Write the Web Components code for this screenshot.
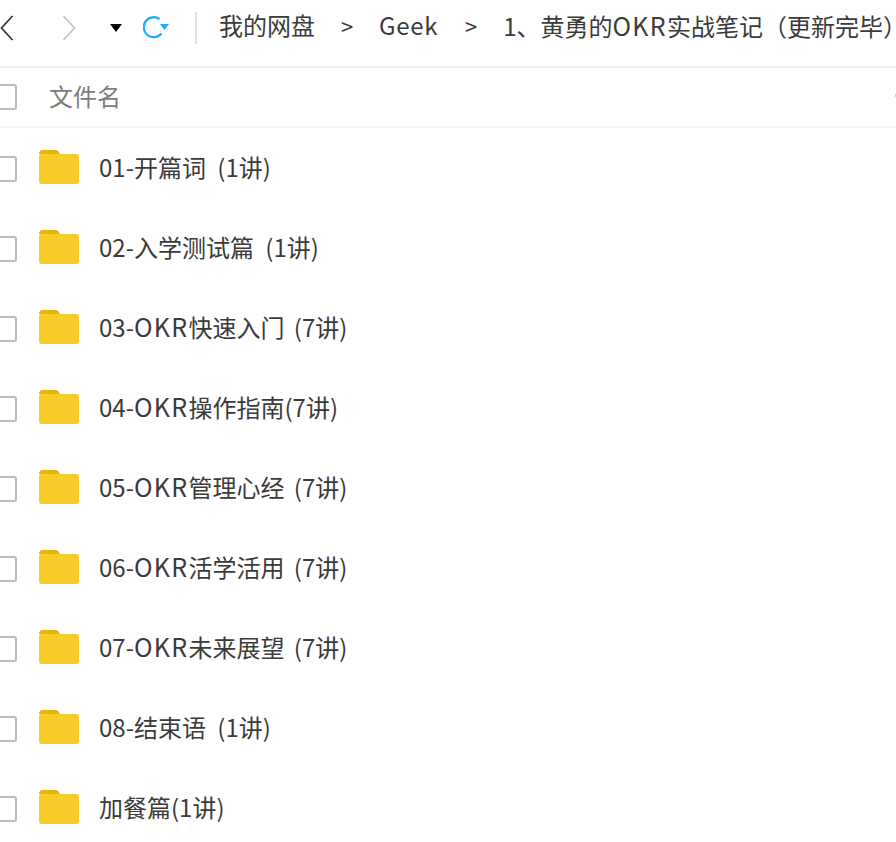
<!DOCTYPE html>
<html lang="zh">
<head>
<meta charset="utf-8">
<title>我的网盘</title>
<style>
  html, body { margin: 0; background: #fff; }
  body {
    width: 896px;
    height: 842px;
    overflow: hidden;
    font-family: "Noto Sans CJK SC", "Noto Sans", sans-serif;
    color: #3b3b3b;
  }
  /* latin runs are wider in the reference than in the CJK font */
  .en { font-size: 25px; letter-spacing: 1.3px; }
  .geek { letter-spacing: .7px; margin-right: 1px; }
  .end { font-feature-settings: "halt"; }
  disk-row.wide { word-spacing: 6px; }
</style>
</head>
<body>
<disk-toolbar>
  <disk-crumb>我的网盘</disk-crumb>
  <disk-crumb><span class="geek">Geek</span></disk-crumb>
  <disk-crumb last>1、黄勇的<span class="en">OKR</span>实战笔记（更新完毕<span class="end">）</span></disk-crumb>
</disk-toolbar>
<disk-list-header>文件名</disk-list-header>
<disk-row class="wide">01-开篇词 (1讲)</disk-row>
<disk-row class="wide">02-入学测试篇 (1讲)</disk-row>
<disk-row>03-<span class="en">OKR</span>快速入门 (7讲)</disk-row>
<disk-row>04-<span class="en">OKR</span>操作指南(7讲)</disk-row>
<disk-row>05-<span class="en">OKR</span>管理心经 (7讲)</disk-row>
<disk-row>06-<span class="en">OKR</span>活学活用 (7讲)</disk-row>
<disk-row>07-<span class="en">OKR</span>未来展望 (7讲)</disk-row>
<disk-row class="wide">08-结束语 (1讲)</disk-row>
<disk-row>加餐篇(1讲)</disk-row>

<script>
(() => {
  const CHECKBOX_STYLE = `
    .check {
      flex: none;
      box-sizing: border-box;
      width: 25px;
      height: 26px;
      margin-left: -8px;
      border: 2px solid #bdbdbd;
      border-radius: 3px;
      background: #fff;
    }
  `;

  class DiskToolbar extends HTMLElement {
    constructor() {
      super();
      this.attachShadow({ mode: 'open' }).innerHTML = `
        <style>
          :host {
            display: flex;
            align-items: center;
            box-sizing: border-box;
            height: 68px;
            padding-bottom: 10px;
            border-bottom: 2px solid #f0f0f0;
            white-space: nowrap;
            overflow: hidden;
          }
          svg { display: block; flex: none; }
          .back { margin-left: 0; }
          .forward { margin-left: 48px; }
          .drop { margin-left: 34px; margin-bottom: 1px; }
          .refresh { margin-left: 21px; margin-bottom: 2px; }
          .divider {
            flex: none;
            width: 2px;
            height: 32px;
            margin: 0 22px 0 25px;
            background: #e2e2e2;
          }
          .crumbs { display: flex; align-items: center; margin-bottom: 7px; }
        </style>
        <svg class="back" width="14" height="26" viewBox="0 0 14 26" fill="none" stroke="#3a3a3a" stroke-width="1.8">
          <path d="M12.500 1 1.500 13l11 12"/>
        </svg>
        <svg class="forward" width="14" height="26" viewBox="0 0 14 26" fill="none" stroke="#c4c4c4" stroke-width="1.8">
          <path d="M1.500 1 12.500 13l-11 12"/>
        </svg>
        <svg class="drop" width="12" height="8" viewBox="0 0 12 8" fill="#000">
          <path d="M0 0h12L6 8z"/>
        </svg>
        <svg class="refresh" width="27" height="24" viewBox="0 0 27 24" fill="none">
          <path d="M16.500 4A10 10 0 1 0 18.500 18.500" stroke="#1fa9ff" stroke-width="2.200"/>
          <path d="M17 9h9l-4.500 6z" fill="#1fa9ff"/>
        </svg>
        <div class="divider"></div>
        <div class="crumbs"><slot></slot></div>
      `;
    }
  }

  class DiskCrumb extends HTMLElement {
    constructor() {
      super();
      this.attachShadow({ mode: 'open' }).innerHTML = `
        <style>
          :host {
            display: inline-flex;
            align-items: center;
            font-size: 24px;
            color: #3b3b3b;
          }
          .sep { width: 64px; text-align: center; font-size: 22px; }
          :host([last]) .sep { display: none; }
        </style>
        <span><slot></slot></span><span class="sep">&gt;</span>
      `;
    }
  }

  class DiskListHeader extends HTMLElement {
    constructor() {
      super();
      this.attachShadow({ mode: 'open' }).innerHTML = `
        <style>
          ${CHECKBOX_STYLE}
          :host {
            display: flex;
            align-items: center;
            box-sizing: border-box;
            height: 60px;
            margin-bottom: 1px;
            border-bottom: 2px solid #f5f5f5;
            font-size: 24px;
            color: #7d7d7d;
          }
          .label { margin-left: 32px; margin-bottom: 4px; }
          .caret { flex: none; width: 1px; height: 3px; margin: 0 0 3px auto; background: #a6dcff; }
        </style>
        <div class="check"></div>
        <span class="label"><slot></slot></span>
        <span class="caret"></span>
      `;
    }
  }

  class DiskRow extends HTMLElement {
    constructor() {
      super();
      this.attachShadow({ mode: 'open' }).innerHTML = `
        <style>
          ${CHECKBOX_STYLE}
          :host {
            display: flex;
            align-items: center;
            height: 80px;
            font-size: 24px;
            color: #3b3b3b;
            white-space: nowrap;
            word-spacing: 4px;
          }
          svg { display: block; flex: none; margin-left: 22px; margin-bottom: 4px; }
          .name { margin-left: 20px; margin-bottom: 6px; }
        </style>
        <div class="check"></div>
        <svg width="40" height="34" viewBox="0 0 40 34">
          <path d="M0 4a4 4 0 0 1 4-4h13a3 3 0 0 1 2.500 1.500L21 4z" fill="#e9b500"/>
          <path d="M0 7a3 3 0 0 1 3-3h34a3 3 0 0 1 3 3v24a3 3 0 0 1-3 3H3a3 3 0 0 1-3-3z" fill="#f9cb2a"/>
        </svg>
        <span class="name"><slot></slot></span>
      `;
    }
  }

  customElements.define('disk-toolbar', DiskToolbar);
  customElements.define('disk-crumb', DiskCrumb);
  customElements.define('disk-list-header', DiskListHeader);
  customElements.define('disk-row', DiskRow);
})();
</script>
</body>
</html>
